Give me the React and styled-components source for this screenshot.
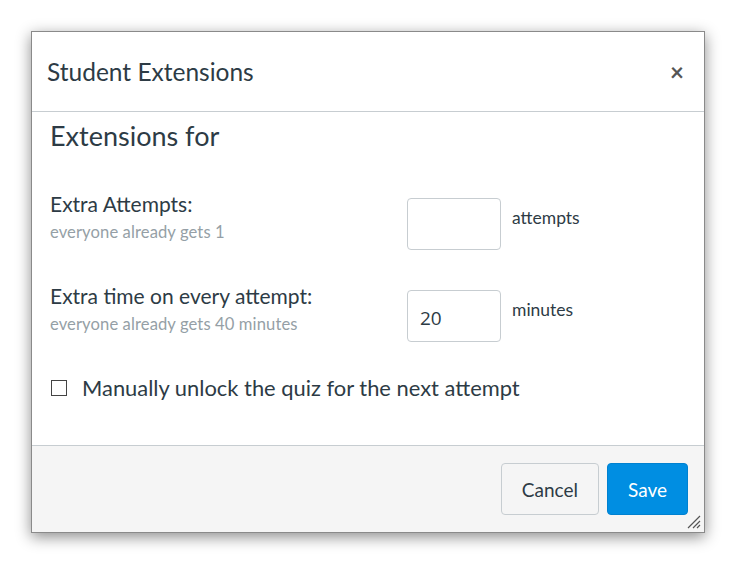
import React from 'react';
import styled, { createGlobalStyle } from 'styled-components';

const GlobalStyle = createGlobalStyle`
  html, body {
    margin: 0;
    padding: 0;
    background: #ffffff;
    font-family: Lato, "Open Sans", sans-serif;
  }
`;

const Page = styled.div`
  width: 737px;
  height: 564px;
  padding: 31px 0 0 31px;
  box-sizing: border-box;
`;

const Dialog = styled.div`
  position: relative;
  width: 674px;
  height: 502px;
  display: flex;
  flex-direction: column;
  background: #fff;
  border: 1px solid #8a8a8a;
  box-sizing: border-box;
  box-shadow: 0 4px 14px rgba(0, 0, 0, 0.45);
`;

const Header = styled.div`
  height: 79px;
  display: flex;
  align-items: center;
  justify-content: space-between;
  padding: 0 20px 0 15px;
  border-bottom: 1px solid #c7cdd1;
`;

const Title = styled.h1`
  margin: 0;
  font-size: 24.5px;
  font-weight: 400;
  color: #2d3b45;
`;

const Close = styled.span`
  font-size: 24px;
  color: #555;
  font-weight: 700;
  line-height: 1;
`;

const Body = styled.div`
  flex: 1;
  padding: 6px 18px 0 18px;
  color: #2d3b45;
`;

const Heading = styled.h2`
  margin: 0 0 38px;
  font-size: 27px;
  font-weight: 400;
  line-height: 36px;
`;

const FieldRow = styled.div`
  display: flex;
  align-items: flex-start;
  margin-bottom: ${(p) => p.gap}px;
`;

const LabelCol = styled.div`
  width: 357px;
`;

const Label = styled.div`
  font-size: 21px;
  line-height: 24px;
`;

const Hint = styled.div`
  font-size: 16.6px;
  letter-spacing: 0.1px;
  color: #959fa6;
  margin-top: 6px;
`;

const Input = styled.div`
  width: 94px;
  height: 52px;
  margin-top: 6px;
  box-sizing: border-box;
  border: 1px solid #c7cdd1;
  border-radius: 4px;
  font-size: 19px;
  display: flex;
  align-items: center;
  padding: 4px 12px 0;
  color: #2d3b45;
  font-family: "Open Sans", sans-serif;
`;

const Unit = styled.span`
  margin-left: 11px;
  padding-top: 15px;
  font-size: 17.5px;
  color: #2d3b45;
`;

const CheckRow = styled.label`
  display: flex;
  align-items: center;
  gap: 15px;
  margin-left: 1px;
  font-size: 21.9px;
`;

const Box = styled.span`
  width: 16px;
  height: 16px;
  border: 1.5px solid #444;
  box-sizing: border-box;
`;

const Footer = styled.div`
  height: 86px;
  background: #f5f5f5;
  border-top: 1px solid #c7cdd1;
  display: flex;
  align-items: center;
  justify-content: flex-end;
  gap: 8px;
  padding: 0 16px 0 0;
`;

const Button = styled.button`
  height: 52px;
  padding: 0 20px;
  border-radius: 4px;
  font-family: Lato, sans-serif;
  font-size: 19px;
  border: 1px solid ${(p) => (p.primary ? '#0081d0' : '#c7cdd1')};
  background: ${(p) => (p.primary ? '#008ee2' : '#f5f5f5')};
  color: ${(p) => (p.primary ? '#fff' : '#2d3b45')};
`;

const Grip = styled.svg`
  position: absolute;
  right: 3px;
  bottom: 3px;
`;

export default function App() {
  return (
    <Page>
      <GlobalStyle />
      <Dialog>
        <Header>
          <Title>Student Extensions</Title>
          <Close>×</Close>
        </Header>
        <Body>
          <Heading>Extensions for</Heading>
          <FieldRow gap={34}>
            <LabelCol>
              <Label>Extra Attempts:</Label>
              <Hint>everyone already gets 1</Hint>
            </LabelCol>
            <Input />
            <Unit>attempts</Unit>
          </FieldRow>
          <FieldRow gap={32}>
            <LabelCol>
              <Label>Extra time on every attempt:</Label>
              <Hint>everyone already gets 40 minutes</Hint>
            </LabelCol>
            <Input>20</Input>
            <Unit>minutes</Unit>
          </FieldRow>
          <CheckRow>
            <Box />
            Manually unlock the quiz for the next attempt
          </CheckRow>
        </Body>
        <Footer>
          <Button>Cancel</Button>
          <Button primary>Save</Button>
        </Footer>
        <Grip width="16" height="16" viewBox="0 0 16 16">
          <path d="M15 3 L3 15 M15 8 L8 15 M15 12 L12 15" stroke="#555" strokeWidth="1.2" />
        </Grip>
      </Dialog>
    </Page>
  );
}
